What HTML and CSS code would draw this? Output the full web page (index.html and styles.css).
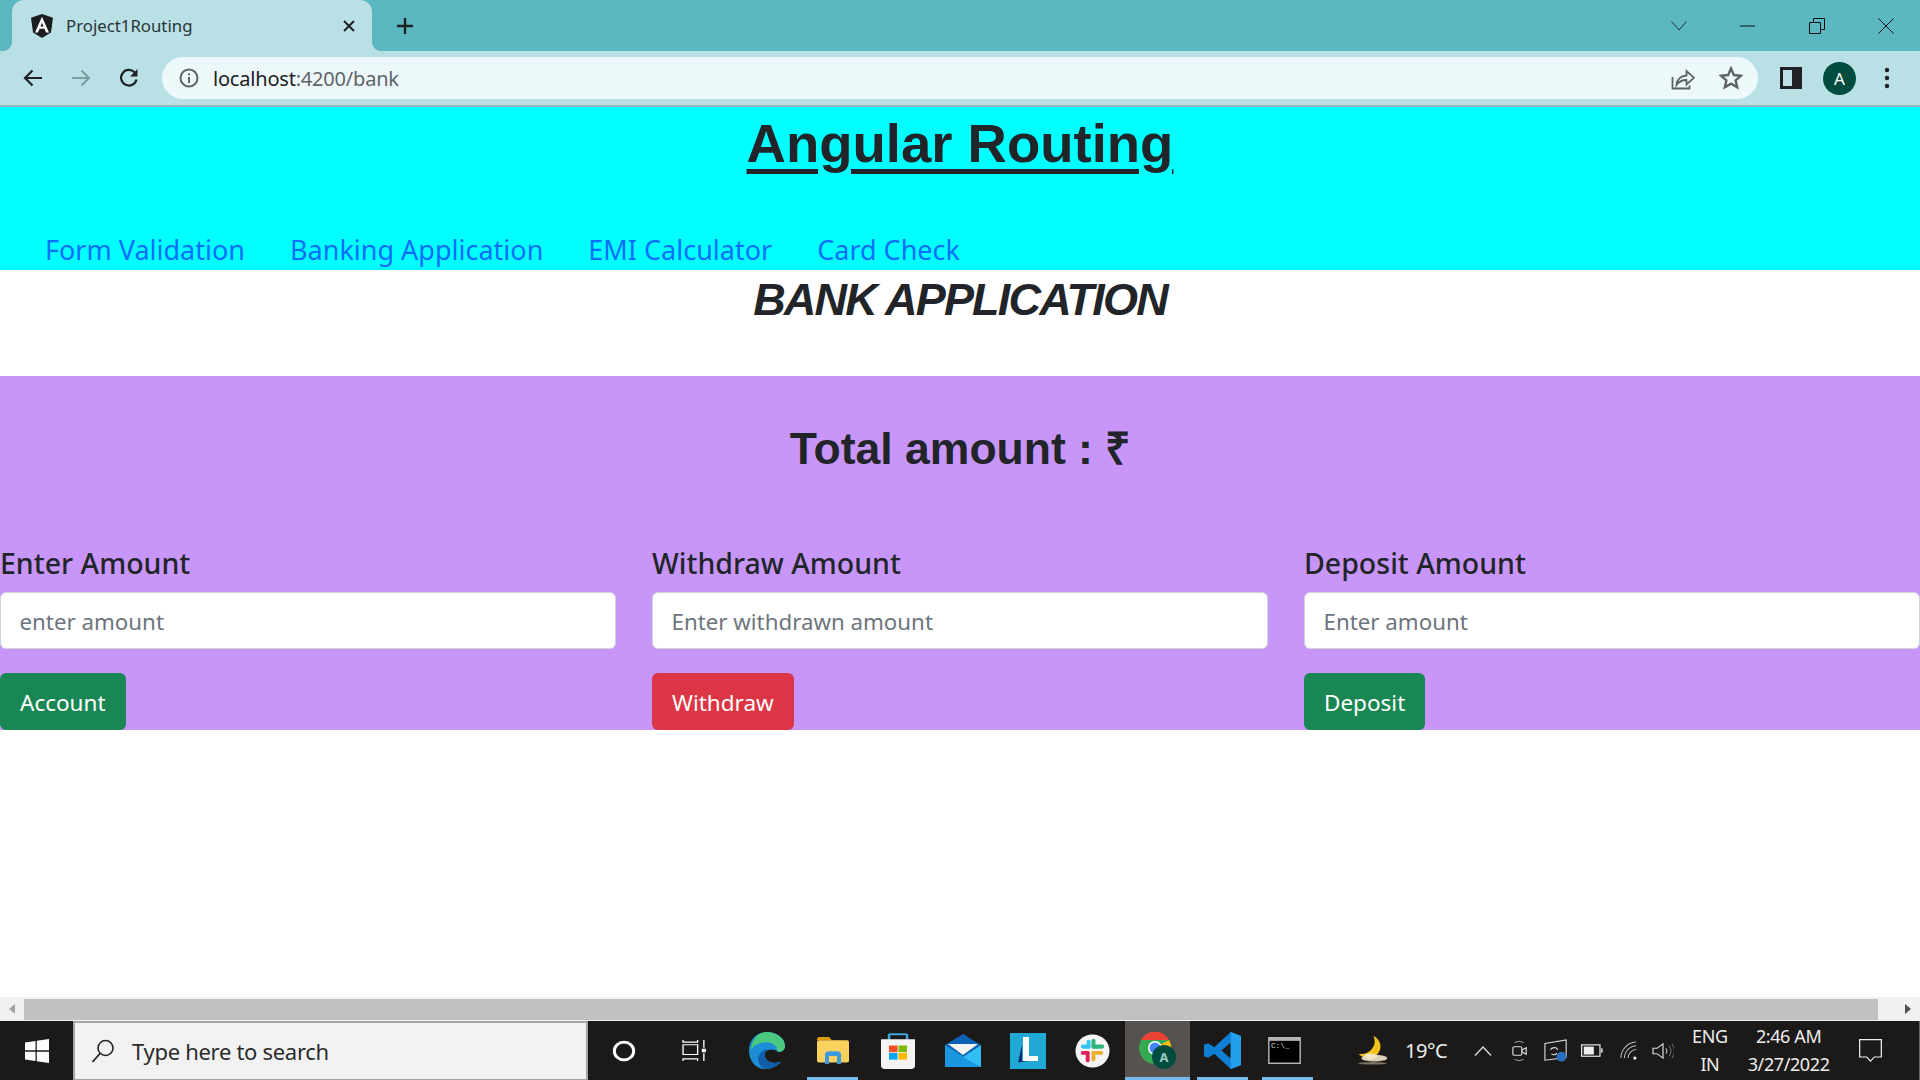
FILE: index.html
```html
<!DOCTYPE html>
<html lang="en">

<head>
    <meta charset="UTF-8">
    <meta name="viewport" content="width=device-width, initial-scale=1.0">
    <title>Project1Routing</title>
    <link rel="stylesheet" href="styles.css">
</head>

<body>
    <div class="window">

        <!-- tab strip -->
        <div class="tabstrip">
            <div class="tab">
                <svg class="favicon" viewBox="0 0 24 26" preserveAspectRatio="none">
                    <path d="M12 0 1 4l2 16 9 6 9-6 2-16z" fill="#1c1d20" />
                    <path d="M12 3 5 20h3l1.500-3.900h5L16 20h3zm-1.600 10.600L12 9.500l1.600 4.100z" fill="#fff" />
                </svg>
                <span class="tab-title">Project1Routing</span>
                <svg class="tab-close" viewBox="0 0 14 14">
                    <path d="M2 2l10 10M12 2 2 12" stroke="#202124" stroke-width="2" fill="none" />
                </svg>
            </div>
            <svg class="newtab" viewBox="0 0 18 18">
                <path d="M9 1v16M1 9h16" stroke="#202124" stroke-width="2.400" fill="none" />
            </svg>
            <div class="window-btns">
                <span class="win-btn">
                    <svg viewBox="0 0 16 10" width="16" height="10"><path d="M.5.500 8 9 15.500.500" stroke="#1d3438" fill="none" /></svg>
                </span>
                <span class="win-btn">
                    <svg viewBox="0 0 16 2" width="16" height="2"><path d="M0 1h15" stroke="#111" /></svg>
                </span>
                <span class="win-btn">
                    <svg viewBox="0 0 16 16" width="16" height="16"><path d="M.5 4.500h11v11H.5zM4.500 4V.500h11v11H12" stroke="#111" fill="none" /></svg>
                </span>
                <span class="win-btn">
                    <svg viewBox="0 0 16 16" width="16" height="16"><path d="M.5.500l15 15M15.500.500l-15 15" stroke="#111" fill="none" /></svg>
                </span>
            </div>
        </div>

        <!-- toolbar -->
        <div class="toolbar">
            <svg class="tool-icon" viewBox="0 0 24 24">
                <path d="M21 12H4M11.500 4.500 4 12l7.500 7.500" stroke="#202124" stroke-width="2.200" fill="none" />
            </svg>
            <svg class="tool-icon" viewBox="0 0 24 24">
                <path d="M3 12h17M12.500 4.500 20 12l-7.500 7.500" stroke="#7f9ea2" stroke-width="2.200" fill="none" />
            </svg>
            <svg class="tool-icon" viewBox="0 0 24 24">
                <path d="M19.500 13.500A7.800 7.800 0 1 1 17.500 6.300" stroke="#202124" stroke-width="2.200" fill="none" />
                <path d="M20.500 3v7.500H13z" fill="#202124" />
            </svg>
            <div class="omnibox">
                <svg class="info-icon" viewBox="0 0 20 20">
                    <circle cx="10" cy="10" r="8.500" stroke="#5f6368" stroke-width="2" fill="none" />
                    <path d="M10 9v6M10 5.200v2" stroke="#5f6368" stroke-width="2" />
                </svg>
                <span class="url">localhost<span class="url-rest">:4200/bank</span></span>
                <svg class="omni-icon" viewBox="0 0 24 24">
                    <path d="M1.500 11v11.500h17v-3" stroke="#5f6368" stroke-width="1.800" fill="none" />
                    <path d="M5.500 19c.5-5.500 4-9 10-9.500V5l7.500 6.800-7.500 6.700v-4.500c-4 0-7.500 1.500-10 5z" stroke="#5f6368" stroke-width="1.800" fill="none" />
                </svg>
                <svg class="omni-icon" viewBox="0 0 24 24">
                    <path d="M12 2.500l2.900 6.500 7.100.7-5.400 4.700 1.600 7-6.200-3.700-6.200 3.700 1.600-7L2 9.700 9.100 9z" stroke="#5f6368" stroke-width="2.400" fill="none" />
                </svg>
            </div>
            <svg class="panel-icon" viewBox="0 0 22 22">
                <rect width="22" height="22" fill="#202124" />
                <rect x="3" y="3" width="9" height="16" fill="#b8e0e5" />
            </svg>
            <span class="avatar">A</span>
            <svg class="menu-icon" viewBox="0 0 6 22">
                <circle cx="3" cy="3" r="2.200" fill="#202124" />
                <circle cx="3" cy="11" r="2.200" fill="#202124" />
                <circle cx="3" cy="19" r="2.200" fill="#202124" />
            </svg>
        </div>

        <!-- page -->
        <div class="page">
            <header class="top">
                <h1 class="main-title">Angular Routing</h1>
                <nav class="links">
                    <a href="#">Form Validation</a>
                    <a href="#">Banking Application</a>
                    <a href="#">EMI Calculator</a>
                    <a href="#">Card Check</a>
                </nav>
            </header>

            <h2 class="bank-title">BANK APPLICATION</h2>

            <section class="bank">
                <h2 class="total">Total amount : ₹</h2>
                <div class="cols">
                    <div class="col">
                        <label class="field-label">Enter Amount</label>
                        <input class="field" type="text" placeholder="enter amount">
                        <button class="btn btn-green">Account</button>
                    </div>
                    <div class="col">
                        <label class="field-label">Withdraw Amount</label>
                        <input class="field" type="text" placeholder="Enter withdrawn amount">
                        <button class="btn btn-red">Withdraw</button>
                    </div>
                    <div class="col">
                        <label class="field-label">Deposit Amount</label>
                        <input class="field" type="text" placeholder="Enter amount">
                        <button class="btn btn-green">Deposit</button>
                    </div>
                </div>
            </section>
        </div>

        <!-- scrollbar -->
        <div class="hscroll">
            <svg class="arrow" viewBox="0 0 8 12"><path d="M7 1v10L1 6z" fill="#a3a3a3" /></svg>
            <div class="thumb"></div>
            <svg class="arrow" viewBox="0 0 8 12"><path d="M1 1v10l6-5z" fill="#505050" /></svg>
        </div>

        <!-- taskbar -->
        <div class="taskbar">
            <div class="start">
                <svg viewBox="0 0 24 24" width="24" height="24">
                    <path d="M0 3.500 10.500 2v9.300H0zM11.800 1.800 24 0v11.300H11.800zM0 12.700h10.500V22L0 20.500zM11.800 12.700H24V24l-12.200-1.800z" fill="#fff" />
                </svg>
            </div>
            <div class="search">
                <svg viewBox="0 0 24 24" width="24" height="24">
                    <circle cx="14.500" cy="9" r="7.500" stroke="#222" stroke-width="1.600" fill="none" />
                    <path d="M9 14.500 1.500 23" stroke="#222" stroke-width="1.800" />
                </svg>
                <span>Type here to search</span>
            </div>
            <div class="slot slot-wide">
                <svg viewBox="0 0 24 24" width="24" height="22" preserveAspectRatio="none"><circle cx="12" cy="12" r="9.700" stroke="#fff" stroke-width="3" fill="none" /></svg>
            </div>
            <div class="slot slot-wide">
                <svg viewBox="0 0 24 26" width="25" height="23" preserveAspectRatio="none">
                    <path d="M1 1v2.500h14V1M1 6.500h14v11H1zM1 25v-2.500h14V25M21 1v9M21 16v9" stroke="#fff" stroke-width="1.300" fill="none" />
                    <rect x="19" y="11" width="4" height="4" fill="#fff" />
                </svg>
            </div>
            <div class="slot slot-edge">
                <svg viewBox="0 0 38 40" width="36" height="37" preserveAspectRatio="none">
                    <path d="M19 0C8 0 0 8 0 20c0 11 7 20 17 20 7 0 13-3 17-8-4 2-9 2-13 0-5-3-6-9-2-12 4-2 9-1 11 1 4 1 8-1 8-6C38 7 30 0 19 0z" fill="#1b8ed6" />
                    <path d="M19 0c10 0 19 7 19 15 0 5-4 7-8 6 0-6-5-10-11-10-8 0-15 4-17 9C3 8 9 0 19 0z" fill="#4ac97e" />
                    <path d="M19 19c-6 1-10 6-9 12 1 5 4 8 8 9 6 0 12-3 16-8-4 2-9 2-13 0-5-3-6-9-2-13z" fill="#0f5da8" />
                </svg>
            </div>
            <div class="slot slot-open">
                <svg viewBox="0 0 32 34" width="32" height="27" preserveAspectRatio="none">
                    <path d="M0 3q0-3 3-3h9l3 4h-15z" fill="#d99e0b" />
                    <rect y="4" width="32" height="28" rx="2" fill="#fcd25f" />
                    <path d="M8 34V22q0-4 4-4h8q4 0 4 4v12h-4v-10h-8v10z" fill="#3d9ae0" />
                </svg>
            </div>
            <div class="slot">
                <svg viewBox="0 0 36 46" width="36" height="36" preserveAspectRatio="none">
                    <path d="M9 12V3q0-1.500 1.500-1.500h15Q27 1.500 27 3v9" stroke="#3fa5dd" stroke-width="2.500" fill="none" />
                    <path d="M1 8h34v34q0 4-4 4H5q-4 0-4-4z" fill="#f4f4f4" />
                    <rect x="9" y="16" width="8.500" height="8.500" fill="#f25022" />
                    <rect x="18.500" y="16" width="8.500" height="8.500" fill="#7fba00" />
                    <rect x="9" y="25.500" width="8.500" height="8.500" fill="#00a4ef" />
                    <rect x="18.500" y="25.500" width="8.500" height="8.500" fill="#ffb900" />
                </svg>
            </div>
            <div class="slot">
                <svg viewBox="0 0 36 33" width="36" height="33">
                    <path d="M0 11 18 0l18 11-18 13z" fill="#0a62b5" />
                    <path d="M3 10h30L18 21z" fill="#f4f4f4" />
                    <path d="M0 11l18 12 18-12v22H0z" fill="#33bdf5" />
                    <path d="M0 11l18 12 18 10H0z" fill="#1a97e0" />
                </svg>
            </div>
            <div class="slot">
                <svg viewBox="0 0 36 36" width="36" height="36">
                    <rect width="36" height="36" fill="#21a9d6" />
                    <path d="M12 12 8 29.500l10-1.500h-6z" fill="#0d2a78" />
                    <path d="M13 4h6v19h9v5H13z" fill="#fff" />
                </svg>
            </div>
            <div class="slot">
                <svg viewBox="0 0 36 36" width="35" height="34" preserveAspectRatio="none">
                    <circle cx="18" cy="18" r="17.500" fill="#f4f4f4" />
                    <rect x="6" y="11" width="10" height="4.500" rx="2.200" fill="#36c5f0" />
                    <rect x="12" y="6" width="4" height="9.500" rx="2" fill="#36c5f0" />
                    <rect x="17" y="5" width="4" height="10.500" rx="2" fill="#2eb67d" />
                    <rect x="17" y="11" width="13" height="4.500" rx="2.200" fill="#2eb67d" />
                    <rect x="6" y="18" width="9" height="4" rx="2" fill="#e01e5a" />
                    <rect x="11" y="18" width="4" height="12" rx="2" fill="#e01e5a" />
                    <rect x="17" y="18" width="12" height="4" rx="2" fill="#ecb22e" />
                    <rect x="17" y="18" width="4" height="11" rx="2" fill="#ecb22e" />
                </svg>
            </div>
            <div class="slot slot-active">
                <svg viewBox="0 0 38 38" width="38" height="38">
                    <circle cx="16" cy="16" r="16" fill="#34a853" />
                    <path d="M2 8A16 16 0 0 1 30 8H16z" fill="#ea4335" />
                    <path d="M30 8a16 16 0 0 1-6 22l-8-14z" fill="#fbbc05" />
                    <circle cx="16" cy="16" r="7" fill="#fff" />
                    <circle cx="16" cy="16" r="5.500" fill="#4285f4" />
                    <circle cx="25" cy="25" r="12" fill="#004d40" />
                    <text class="mini-a" x="25" y="30" text-anchor="middle">A</text>
                </svg>
            </div>
            <div class="slot slot-open">
                <svg viewBox="0 0 36 46" width="37" height="37" preserveAspectRatio="none">
                    <path d="M26 0l10 5v36l-10 5-16-19-6 5-4-2V16l4-2 6 5zM26 13l-9 10 9 10z" fill="#0e7fd2" />
                    <path d="M26 0l10 5v36l-10 5z" fill="#23a0ec" />
                </svg>
            </div>
            <div class="slot slot-open slot-term">
                <svg viewBox="0 0 34 28" width="33" height="27">
                    <rect width="34" height="28" fill="#b5b5b5" />
                    <rect x="1.500" y="4" width="31" height="22.500" fill="#000" />
                    <text class="mini-term" x="3" y="11">C:\_</text>
                </svg>
            </div>

            <div class="tray">
                <svg class="moon" viewBox="0 0 36 34" width="33" height="29" preserveAspectRatio="none">
                    <path d="M19 0A13.500 13.500 0 1 1 3 21 15 15 0 0 0 19 0z" fill="#f3c21b" />
                    <ellipse cx="20" cy="26" rx="14" ry="4" fill="#d9cfb6" />
                    <ellipse cx="16" cy="24" rx="7" ry="3.500" fill="#f2e6c6" />
                    <ellipse cx="18" cy="32" rx="16" ry="1.500" fill="#7d7463" />
                </svg>
                <span class="temp">19°C</span>
                <svg class="tray-chev" viewBox="0 0 18 10" width="18" height="10"><path d="M1 9.500 9 1l8 8.500" stroke="#ddd" stroke-width="1.300" fill="none" /></svg>
                <svg class="tray-icon tray-meet" viewBox="0 0 18 26" width="16" height="22" preserveAspectRatio="none">
                    <path d="M3 3q5-3 10 0M3 23q5 3 10 0" stroke="#bbb" fill="none" />
                    <rect x="1" y="8" width="10" height="10" rx="1.500" stroke="#ddd" stroke-width="1.300" fill="none" />
                    <path d="M11 12l5-3v8l-5-3" stroke="#ddd" stroke-width="1.300" fill="none" />
                </svg>
                <svg class="tray-icon tray-sync" viewBox="0 0 26 26" width="24" height="23" preserveAspectRatio="none">
                    <path d="M1 5 24 1v20L1 24z" stroke="#ddd" stroke-width="1.200" fill="none" />
                    <path d="M7 12q2-3 6-2l2 2M14 16q-2 3-6 1" stroke="#ddd" stroke-width="1.200" fill="none" />
                    <circle cx="19" cy="20" r="5.500" fill="#2a6fbf" />
                </svg>
                <svg class="tray-icon tray-batt" viewBox="0 0 24 16" width="22" height="14" preserveAspectRatio="none">
                    <rect x=".7" y="1" width="20" height="13" stroke="#eee" stroke-width="1.300" fill="none" />
                    <rect x="3" y="3" width="11" height="9" fill="#eee" />
                    <rect x="22" y="5" width="1.500" height="5" fill="#eee" />
                </svg>
                <svg class="tray-icon tray-wifi" viewBox="0 0 20 20" width="18" height="19" preserveAspectRatio="none">
                    <path d="M1 18C1 9 9 1 18 1M5 18c0-7 6-13 13-13M9 18c0-5 4-9 9-9" stroke="#bbb" stroke-width="1.100" fill="none" />
                    <circle cx="16.500" cy="18" r="1.800" fill="#eee" />
                </svg>
                <svg class="tray-icon tray-vol" viewBox="0 0 22 20" width="22" height="18" preserveAspectRatio="none">
                    <path d="M1 7h4l6-5v16l-6-5H1z" stroke="#ddd" stroke-width="1.200" fill="none" />
                    <path d="M14 7q2 3 0 6" stroke="#ddd" fill="none" />
                    <path d="M17 4q4 6 0 12M20 2q5 8 0 16" stroke="#777" fill="none" />
                </svg>
                <div class="lang"><span>ENG</span><span>IN</span></div>
                <div class="clock"><span>2:46 AM</span><span>3/27/2022</span></div>
                <svg class="notif" viewBox="0 0 24 26" width="23" height="23" preserveAspectRatio="none">
                    <path d="M.7.700h22.600v19.600h-7.300L12 25l-4-4.700H.7z" stroke="#eee" stroke-width="1.300" fill="none" />
                </svg>
                <div class="show-desktop"></div>
            </div>
        </div>

    </div>
</body>

</html>
```

FILE: styles.css
```css
html,
body {
    margin: 0;
    padding: 0;
}

.window {
    width: 1920px;
    height: 1080px;
    display: flex;
    flex-direction: column;
    overflow: hidden;
    background-color: white;
    font-family: "Noto Sans", sans-serif;
    color: #212529;
}

/* tab strip */
.tabstrip {
    height: 51px;
    flex: none;
    display: flex;
    align-items: center;
    background-color: #5bb8c1;
}

.tab {
    width: 360px;
    height: 51px;
    margin-left: 12px;
    box-sizing: border-box;
    padding: 0 16px 0 18px;
    position: relative;
    display: flex;
    align-items: center;
    background-color: #b8e0e5;
    border-radius: 12px 12px 0 0;
}

.tab::before,
.tab::after {
    content: "";
    position: absolute;
    bottom: 0;
    width: 10px;
    height: 10px;
}

.tab::before {
    left: -10px;
    background: radial-gradient(circle at 0 0, #5bb8c1 10px, #b8e0e5 10.500px);
}

.tab::after {
    right: -10px;
    background: radial-gradient(circle at 100% 0, #5bb8c1 10px, #b8e0e5 10.500px);
}

.favicon {
    width: 24px;
    height: 24px;
    flex: none;
}

.tab-title {
    margin-left: 12px;
    font-size: 16.800px;
    color: #2b3436;
    flex: 1;
}

.tab-close {
    width: 14px;
    height: 14px;
}

.newtab {
    width: 18px;
    height: 18px;
    margin-left: 24px;
}

.window-btns {
    margin-left: auto;
    display: flex;
    align-items: center;
    height: 42px;
}

.win-btn {
    width: 69px;
    display: flex;
    justify-content: center;
    align-items: center;
}

/* toolbar */
.toolbar {
    height: 54px;
    flex: none;
    display: flex;
    align-items: center;
    padding-left: 21px;
    background-color: #b8e0e5;
    border-bottom: 2px solid #93b3b7;
}

.tool-icon {
    width: 24px;
    height: 24px;
    margin-right: 24px;
}

.omnibox {
    width: 1596px;
    height: 42px;
    margin-left: -3px;
    box-sizing: border-box;
    padding: 0 15px 0 17px;
    display: flex;
    align-items: center;
    background-color: #ecf8f9;
    border-radius: 21px;
}

.info-icon {
    width: 20px;
    height: 20px;
    margin-right: 14px;
}

.url {
    flex: 1;
    font-size: 20px;
    letter-spacing: -0.2px;
    color: #202124;
}

.url-rest {
    color: #5f6368;
}

.omni-icon {
    width: 24px;
    height: 24px;
    margin-left: 24px;
}

.panel-icon {
    width: 22px;
    height: 22px;
    margin-left: 22px;
}

.avatar {
    width: 33px;
    height: 33px;
    margin-left: 21px;
    display: flex;
    justify-content: center;
    align-items: center;
    border-radius: 50%;
    background-color: #004d40;
    color: white;
    font-size: 17px;
}

.menu-icon {
    width: 6px;
    height: 22px;
    margin-left: 28px;
}

/* page */
.page {
    flex: 1;
    min-height: 0;
}

.top {
    height: 163px;
    box-sizing: border-box;
    display: flex;
    flex-direction: column;
    background-color: #00ffff;
}

.main-title {
    margin: 0;
    padding-top: 6px;
    font-family: "Liberation Sans", sans-serif;
    font-size: 54.500px;
    line-height: 62px;
    font-weight: bold;
    text-align: center;
    text-decoration: underline;
    text-decoration-thickness: 5px;
    text-underline-offset: 7px;
}

.links {
    margin-top: auto;
    padding-left: 45px;
    padding-bottom: 2px;
    display: flex;
    gap: 45px;
    height: 38px;
    align-items: center;
}

.links a {
    font-size: 27px;
    color: #0d6efd;
    text-decoration: none;
}

.bank-title {
    margin: 0;
    height: 106px;
    padding-top: 6px;
    box-sizing: border-box;
    font-family: "Liberation Sans", sans-serif;
    font-size: 45px;
    line-height: 48px;
    letter-spacing: -1.800px;
    font-style: italic;
    font-weight: bold;
    text-align: center;
}

.bank {
    height: 354px;
    box-sizing: border-box;
    background-color: #c896f8;
}

.total {
    margin: 0;
    padding-top: 49px;
    height: 168px;
    box-sizing: border-box;
    font-family: "Liberation Sans", sans-serif;
    font-size: 44.500px;
    line-height: 48px;
    font-weight: bold;
    text-align: center;
}

.cols {
    display: grid;
    grid-template-columns: repeat(3, 616px);
    gap: 36px;
}

.col {
    display: flex;
    flex-direction: column;
    align-items: flex-start;
}

.field-label {
    height: 48px;
    line-height: 38px;
    font-size: 28.500px;
    font-weight: 500;
}

.field {
    width: 100%;
    height: 57px;
    box-sizing: border-box;
    padding: 2px 18.500px 0;
    border: 1px solid #ced4da;
    border-radius: 6px;
    background-color: white;
    font-family: "Noto Sans", sans-serif;
    font-size: 22.300px;
}

.field::placeholder {
    color: #6c757d;
}

.btn {
    height: 57px;
    margin-top: 24px;
    padding: 2px 20px 0;
    border: none;
    border-radius: 6px;
    font-family: "Noto Sans", sans-serif;
    font-size: 22.500px;
    color: white;
}

.btn-green {
    background-color: #198754;
}

.btn-red {
    background-color: #dc3545;
}

/* scrollbar */
.hscroll {
    height: 23px;
    flex: none;
    display: flex;
    align-items: flex-end;
    background-color: #f1f1f1;
}

.arrow {
    width: 8px;
    height: 12px;
    flex: none;
    margin: 0 8px 5px;
}

.thumb {
    flex: 1;
    height: 21px;
    margin-right: 18px;
    background-color: #c1c1c1;
}

/* taskbar */
.taskbar {
    height: 60px;
    flex: none;
    box-sizing: border-box;
    display: flex;
    align-items: center;
    border-top: 1px solid #f0f0f0;
    background-color: #1c1a19;
}

.start {
    width: 73px;
    height: 100%;
    flex: none;
    display: flex;
    justify-content: center;
    align-items: center;
}

.search {
    width: 515px;
    height: 100%;
    flex: none;
    box-sizing: border-box;
    padding-left: 16px;
    display: flex;
    align-items: center;
    gap: 17px;
    background-color: #f2f2f2;
    border: 2px solid #a5a5a5;
    border-bottom-width: 1px;
    font-size: 22px;
    letter-spacing: -0.3px;
    color: #2b2b2b;
}

.slot {
    width: 65px;
    height: 100%;
    flex: none;
    box-sizing: border-box;
    position: relative;
    display: flex;
    justify-content: center;
    align-items: center;
}

.slot-wide {
    width: 71px;
}

.slot-edge {
    width: 70px;
    padding-left: 4px;
}

.slot-term {
    padding-right: 6px;
}

.slot-open::after,
.slot-active::after {
    content: "";
    position: absolute;
    left: 7px;
    right: 7px;
    bottom: 0;
    height: 3px;
    background-color: #76b9ed;
}

.slot-active {
    background-color: #55524f;
}

.slot-active::after {
    left: 0;
    right: 0;
}

.mini-a {
    font-family: "Noto Sans", sans-serif;
    font-size: 13px;
    font-weight: bold;
    fill: #9cc7bd;
}

.mini-term {
    font-family: "Liberation Mono", monospace;
    font-size: 8px;
    fill: #ddd;
}

.tray {
    flex: 1;
    height: 100%;
    padding-left: 36px;
    display: flex;
    align-items: center;
    color: #eee;
}

.moon {
    flex: none;
}

.temp {
    margin-left: 16px;
    font-size: 20px;
    letter-spacing: -0.5px;
}

.tray-chev {
    margin-left: 27px;
}

.tray-icon {
    flex: none;
}

.tray-meet {
    margin-left: 20px;
}

.tray-sync {
    margin-left: 16px;
}

.tray-batt {
    margin-left: 13px;
}

.tray-wifi {
    margin-left: 17px;
}

.tray-vol {
    margin-left: 14px;
}

.lang,
.clock {
    display: flex;
    flex-direction: column;
    align-items: center;
    justify-content: space-between;
    height: 52px;
    margin-bottom: 2px;
    font-size: 18px;
    line-height: 24px;
    letter-spacing: -0.4px;
}

.lang {
    margin-left: 18px;
}

.clock {
    margin-left: 20px;
}

.notif {
    margin-left: 29px;
    flex: none;
}

.show-desktop {
    width: 1px;
    height: 100%;
    margin-left: 37px;
    background-color: #666;
}
```
